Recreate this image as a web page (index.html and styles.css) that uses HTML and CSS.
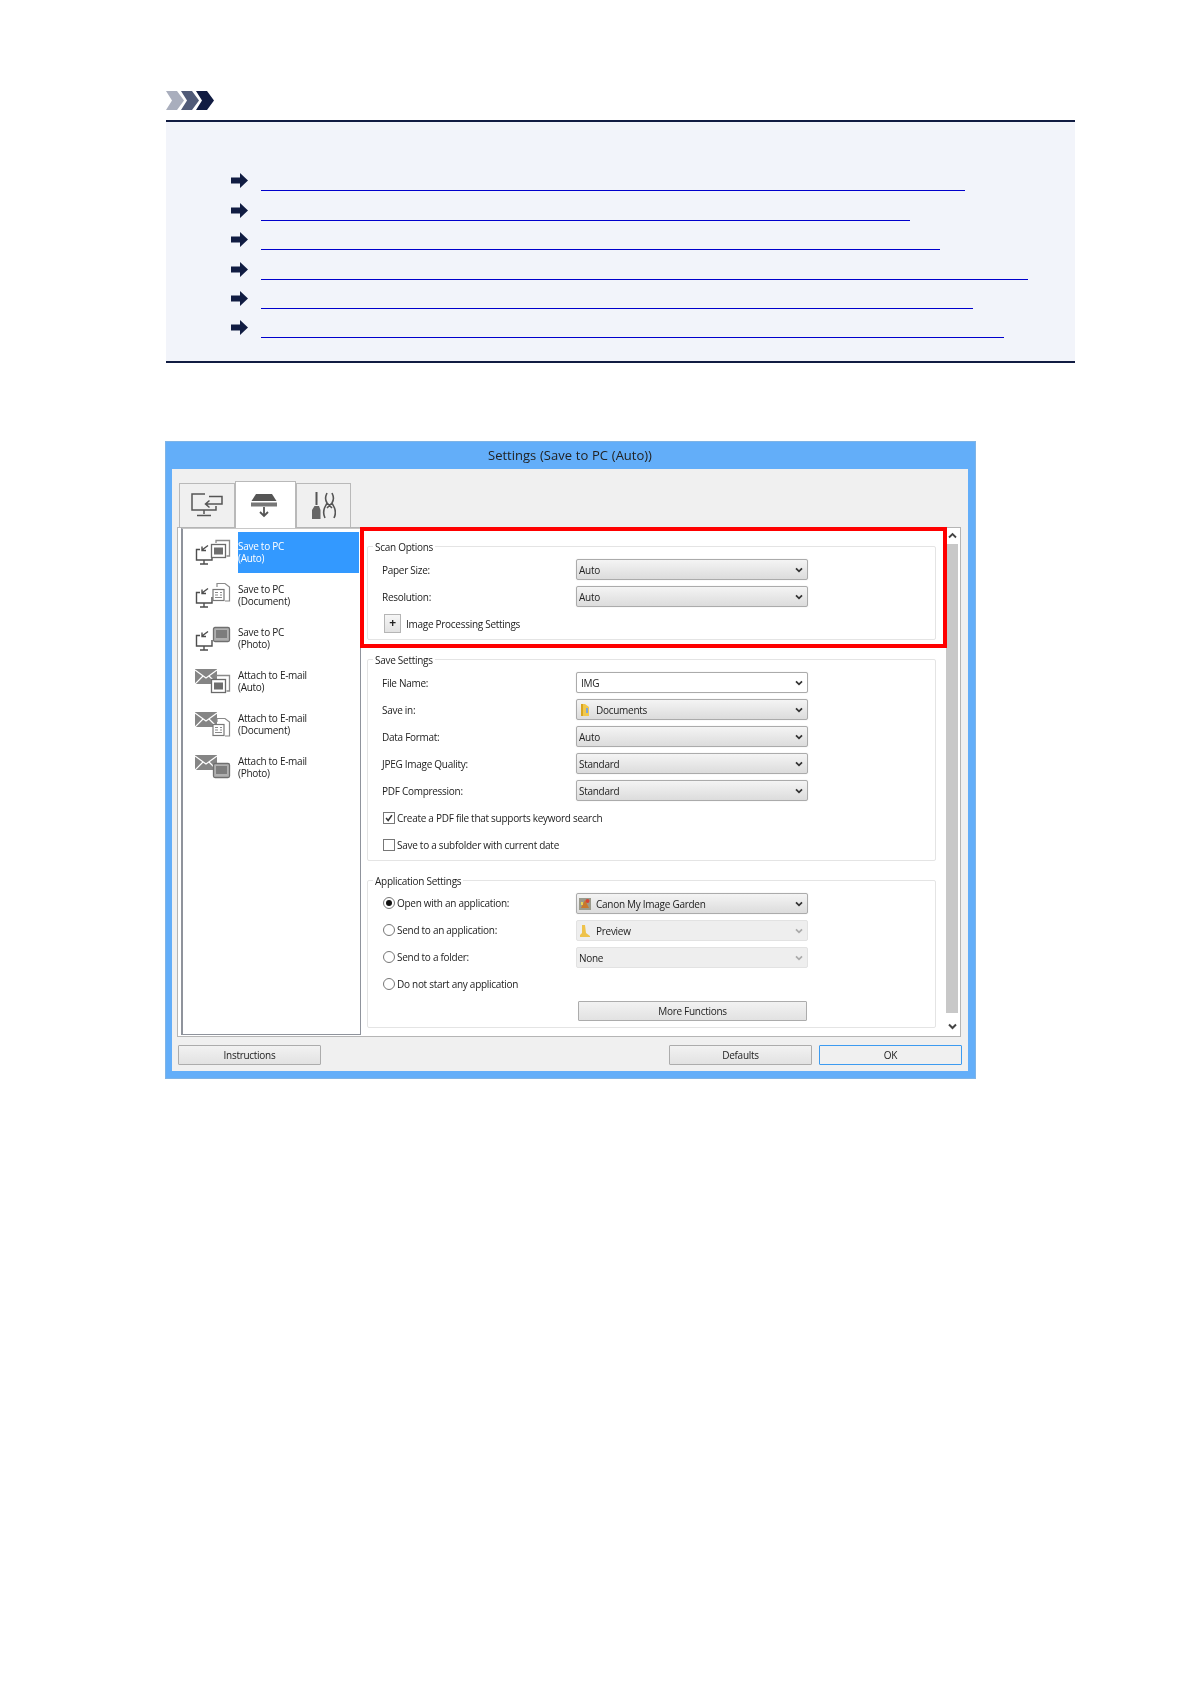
FILE: index.html
```html
<!DOCTYPE html>
<html lang="en">
<head>
    <meta charset="UTF-8">
    <meta name="viewport" content="width=device-width, initial-scale=1.0">
    <title>Settings (Save to PC (Auto))</title>
    <link rel="stylesheet" href="styles.css">
</head>
<body>
    <!-- shared icon parts -->
    <svg class="icon-defs" xmlns="http://www.w3.org/2000/svg">
        <defs>
            <g id="pc" fill="none" stroke="#4d4d4d" stroke-width="1.4">
                <path d="M5 10.5H1.5V21H17V15"/>
                <path d="M9 21v4M5 25h8"/>
                <path d="M13 6.5L7 11M7 7.5V11.5H11"/>
            </g>
            <g id="mail">
                <rect x="0" y="1" width="22" height="15" fill="#858585"/>
                <path d="M0 2L11 10L22 2M0 16L8 8M22 16L14 8" fill="none" stroke="#fff" stroke-width="1.2"/>
            </g>
            <g id="doc-auto" fill="none" stroke="#6a6a6a" stroke-width="1.3">
                <path d="M21 4V1.5H34.5V17H31.5" stroke="#8a8a8a"/>
                <rect x="16.5" y="5.5" width="14" height="13" fill="#fff"/>
                <rect x="19" y="8.5" width="9" height="7" fill="#6e6e6e" stroke="none"/>
            </g>
            <g id="doc-page" fill="none" stroke="#777" stroke-width="1.2">
                <path d="M22 5V1.5H30L34.5 5V19H30" stroke="#8a8a8a"/>
                <rect x="18" y="7.5" width="11" height="11" fill="#fff"/>
                <path d="M20 10.5h3M25 10.5h2M20 13h3M25 13h2M20 15.5h7" stroke="#888"/>
            </g>
            <g id="doc-photo">
                <rect x="18.5" y="2.5" width="16" height="14" rx="1.5" fill="#b0b0b0" stroke="#6f6f6f" stroke-width="1.3"/>
                <rect x="21" y="5" width="11" height="8" fill="#7d7d7d"/>
            </g>
            <path id="chev" d="M1 1.5L4.5 5L8 1.5" fill="none" stroke-width="2"/>
            <path id="go" d="M0 4.5H9V0L17 7.5L9 15V10.5H0Z" fill="#111c42"/>
            <g id="folder">
                <path d="M2 1H6L10 4V13H2Z" fill="#f1c84c"/>
                <path d="M2 1H4V13H2Z" fill="#d9a520"/>
                <path d="M7 5h2v5H7Z" fill="#7fa6d8"/>
            </g>
        </defs>
    </svg>

    <div class="page">
        <svg class="note-mark" viewBox="0 0 48 19" xmlns="http://www.w3.org/2000/svg">
            <path d="M0 0H11L18 9.5L11 19H0L6 9.5Z" fill="#a9aebd"/>
            <path d="M15 0H26L33 9.5L26 19H15L21 9.5Z" fill="#515b78"/>
            <path d="M30 0H41L48 9.5L41 19H30L36 9.5Z" fill="#111c42"/>
        </svg>

        <div class="note">
            <div class="note-row"><svg class="arrow" viewBox="0 0 17 15"><use href="#go"/></svg><a class="link link-1" href="#"></a></div>
            <div class="note-row"><svg class="arrow" viewBox="0 0 17 15"><use href="#go"/></svg><a class="link link-2" href="#"></a></div>
            <div class="note-row"><svg class="arrow" viewBox="0 0 17 15"><use href="#go"/></svg><a class="link link-3" href="#"></a></div>
            <div class="note-row"><svg class="arrow" viewBox="0 0 17 15"><use href="#go"/></svg><a class="link link-4" href="#"></a></div>
            <div class="note-row"><svg class="arrow" viewBox="0 0 17 15"><use href="#go"/></svg><a class="link link-5" href="#"></a></div>
            <div class="note-row"><svg class="arrow" viewBox="0 0 17 15"><use href="#go"/></svg><a class="link link-6" href="#"></a></div>
        </div>

        <div class="dialog">
            <div class="title-bar">Settings (Save to PC (Auto))</div>
            <div class="dialog-body">
                <div class="tabs">
                    <div class="tab tab-scan">
                        <svg class="tab-icon" width="33" height="24" viewBox="0 0 33 24" fill="none" stroke="#555" stroke-width="1.5">
                            <path d="M14 1H1V17H25V13"/>
                            <path d="M13 17v4M6 22.5h14"/>
                            <path d="M18 3.5H31V11H15M18.5 7.5L14.5 11L18.5 14.5"/>
                        </svg>
                    </div>
                    <div class="tab tab-active">
                        <svg class="tab-icon scanner-icon" width="26" height="24" viewBox="0 0 26 24">
                            <path d="M5 0H21L25.5 7H.5Z" fill="#555"/>
                            <rect x="0" y="8.5" width="26" height="4" fill="#777"/>
                            <path d="M13 13V21M9 18L13 22L17 18" fill="none" stroke="#555" stroke-width="1.8"/>
                        </svg>
                    </div>
                    <div class="tab tab-tools">
                        <svg class="tab-icon" width="24" height="27" viewBox="0 0 24 27">
                            <path d="M4.5 0V13" stroke="#555" stroke-width="2"/>
                            <path d="M2.5 14H7L8.5 18V27H0V18Z" fill="#666"/>
                            <path d="M15 1C13 5 13 8 15 11L12.5 16C11 20 12 24 13 26M20 1C22 5 22 8 20 11L22.5 16C24 20 23 24 22 26M15 11L20 16M20 11L15 16" fill="none" stroke="#555" stroke-width="1.6"/>
                        </svg>
                    </div>
                </div>

                <div class="pane">
                    <div class="job-list">
                        <div class="job">
                            <svg class="job-icon" viewBox="0 0 36 27"><use href="#pc"/><use href="#doc-auto"/></svg>
                            <div class="job-label job-selected">Save to PC<br>(Auto)</div>
                        </div>
                        <div class="job">
                            <svg class="job-icon" viewBox="0 0 36 27"><use href="#pc"/><use href="#doc-page"/></svg>
                            <div class="job-label">Save to PC<br>(Document)</div>
                        </div>
                        <div class="job">
                            <svg class="job-icon" viewBox="0 0 36 27"><use href="#pc"/><use href="#doc-photo"/></svg>
                            <div class="job-label">Save to PC<br>(Photo)</div>
                        </div>
                        <div class="job">
                            <svg class="job-icon" viewBox="0 0 36 27"><use href="#mail"/><use href="#doc-auto" y="6"/></svg>
                            <div class="job-label">Attach to E-mail<br>(Auto)</div>
                        </div>
                        <div class="job">
                            <svg class="job-icon" viewBox="0 0 36 27"><use href="#mail"/><use href="#doc-page" y="6"/></svg>
                            <div class="job-label">Attach to E-mail<br>(Document)</div>
                        </div>
                        <div class="job">
                            <svg class="job-icon" viewBox="0 0 36 27"><use href="#mail"/><use href="#doc-photo" y="7"/></svg>
                            <div class="job-label">Attach to E-mail<br>(Photo)</div>
                        </div>
                    </div>

                    <div class="settings">
                        <div class="group">
                            <div class="legend">Scan Options</div>
                            <div class="row">
                                <div class="row-label">Paper Size:</div>
                                <div class="select"><span class="select-text">Auto</span><svg class="chev" viewBox="0 0 9 7"><use href="#chev"/></svg></div>
                            </div>
                            <div class="row">
                                <div class="row-label">Resolution:</div>
                                <div class="select"><span class="select-text">Auto</span><svg class="chev" viewBox="0 0 9 7"><use href="#chev"/></svg></div>
                            </div>
                            <div class="row">
                                <div class="expander">
                                    <div class="plus">+</div>
                                    <span class="expander-text">Image Processing Settings</span>
                                </div>
                            </div>
                        </div>

                        <div class="group">
                            <div class="legend">Save Settings</div>
                            <div class="row">
                                <div class="row-label">File Name:</div>
                                <div class="select select-edit"><span class="select-text">IMG</span><svg class="chev" viewBox="0 0 9 7"><use href="#chev"/></svg></div>
                            </div>
                            <div class="row">
                                <div class="row-label">Save in:</div>
                                <div class="select">
                                    <svg class="app-icon" viewBox="0 0 12 14"><use href="#folder"/></svg>
                                    <span class="select-text">Documents</span><svg class="chev" viewBox="0 0 9 7"><use href="#chev"/></svg>
                                </div>
                            </div>
                            <div class="row">
                                <div class="row-label">Data Format:</div>
                                <div class="select"><span class="select-text">Auto</span><svg class="chev" viewBox="0 0 9 7"><use href="#chev"/></svg></div>
                            </div>
                            <div class="row">
                                <div class="row-label">JPEG Image Quality:</div>
                                <div class="select"><span class="select-text">Standard</span><svg class="chev" viewBox="0 0 9 7"><use href="#chev"/></svg></div>
                            </div>
                            <div class="row">
                                <div class="row-label">PDF Compression:</div>
                                <div class="select"><span class="select-text">Standard</span><svg class="chev" viewBox="0 0 9 7"><use href="#chev"/></svg></div>
                            </div>
                            <div class="row">
                                <div class="option option-solo">
                                    <span class="check">
                                        <svg viewBox="0 0 12 12"><path d="M2.5 6L5 9L9.5 2.5" fill="none" stroke="#333" stroke-width="1.8"/></svg>
                                    </span>
                                    Create a PDF file that supports keyword search
                                </div>
                            </div>
                            <div class="row">
                                <div class="option option-solo"><span class="check"></span>Save to a subfolder with current date</div>
                            </div>
                        </div>

                        <div class="group">
                            <div class="legend">Application Settings</div>
                            <div class="row">
                                <div class="row-label"><div class="option"><span class="radio radio-on"></span>Open with an application:</div></div>
                                <div class="select">
                                    <svg class="app-icon" viewBox="0 0 12 14">
                                        <rect x="0" y="1" width="12" height="12" fill="#9a9a8c"/>
                                        <path d="M2 11L6 3L10 11Z" fill="#c9792c"/>
                                        <circle cx="8.5" cy="4" r="2" fill="#d8432f"/>
                                        <path d="M2 5h2v3H2Z" fill="#e8d35a"/>
                                    </svg>
                                    <span class="select-text">Canon My Image Garden</span><svg class="chev" viewBox="0 0 9 7"><use href="#chev"/></svg>
                                </div>
                            </div>
                            <div class="row">
                                <div class="row-label"><div class="option"><span class="radio"></span>Send to an application:</div></div>
                                <div class="select select-off">
                                    <svg class="app-icon" viewBox="0 0 12 14"><path d="M3 1H6L7 9L11 12V13H1V11L3 9Z" fill="#eec24a"/></svg>
                                    <span class="select-text">Preview</span><svg class="chev" viewBox="0 0 9 7"><use href="#chev"/></svg>
                                </div>
                            </div>
                            <div class="row">
                                <div class="row-label"><div class="option"><span class="radio"></span>Send to a folder:</div></div>
                                <div class="select select-off"><span class="select-text">None</span><svg class="chev" viewBox="0 0 9 7"><use href="#chev"/></svg></div>
                            </div>
                            <div class="row">
                                <div class="row-label"><div class="option"><span class="radio"></span>Do not start any application</div></div>
                            </div>
                            <div class="row">
                                <div class="row-label"></div>
                                <div class="button button-more">More Functions</div>
                            </div>
                        </div>
                    </div>

                    <div class="scrollbar">
                        <svg class="scroll-arrow" viewBox="0 0 9 7"><path d="M1 5.5L4.5 2L8 5.5" fill="none" stroke="#444" stroke-width="1.8"/></svg>
                        <div class="scroll-thumb"></div>
                        <svg class="scroll-arrow" viewBox="0 0 9 7"><use href="#chev" stroke="#444"/></svg>
                    </div>

                    <!-- red callout over the Scan Options group -->
                    <div class="highlight"></div>
                </div>

                <div class="footer">
                    <div class="button">Instructions</div>
                    <div class="footer-right">
                        <div class="button">Defaults</div>
                        <div class="button button-default">OK</div>
                    </div>
                </div>
            </div>
        </div>
    </div>
</body>
</html>
```

FILE: styles.css
```css
body {
    margin: 0;
    background-color: white;
    color: #222;
    font-family: "Open Sans", "Noto Sans", sans-serif;
}

.icon-defs {
    position: absolute;
    width: 0;
    height: 0;
}

.page {
    width: 911px;
    padding: 91px 0 0 165px;
}

/* Note block */
.note-mark {
    display: block;
    width: 48px;
    height: 19px;
    margin-left: 1px;
}

.note {
    margin: 10px 0 0 1px;
    padding: 40px 0 22.6px 65px;
    width: 844px;
    background-color: #f2f4fa;
    border-top: 2px solid #111c42;
    border-bottom: 2px solid #111c42;
}

.note-row {
    display: flex;
    align-items: flex-end;
    height: 29.4px;
}

.arrow {
    width: 17px;
    height: 15px;
    margin-right: 13px;
    margin-bottom: 3px;
}

.link {
    display: block;
    height: 0;
    border-bottom: 1px solid #0000cc;
}

.link-1 { width: 704px; }
.link-2 { width: 649px; }
.link-3 { width: 679px; }
.link-4 { width: 767px; }
.link-5 { width: 712px; }
.link-6 { width: 743px; }

/* Dialog */
.dialog {
    width: 811px;
    margin-top: 78px;
    padding: 0 8px 8px 7px;
    box-sizing: border-box;
    background-color: #63aef9;
    outline: 1px solid #7fb4e6;
    outline-offset: -1px;
    font-size: 10px;
    letter-spacing: -0.28px;
    filter: blur(0.45px);
}

.title-bar {
    height: 28px;
    line-height: 28px;
    text-align: center;
    font-size: 13px;
    letter-spacing: 0;
    word-spacing: 0.4px;
    color: #222;
}

.dialog-body {
    height: 602px;
    padding: 12px 7px 0 5px;
    box-sizing: border-box;
    background-color: #f0f0f0;
}

.tabs {
    display: flex;
    align-items: flex-end;
    height: 47px;
    margin: 0 0 -1px 2px;
    position: relative;
    z-index: 1;
}

.tab {
    display: flex;
    justify-content: center;
    align-items: center;
    height: 44px;
    margin-bottom: 1px;
    box-sizing: border-box;
    border: 1px solid #b9b9b9;
    border-bottom: none;
    background-color: #f0f0f0;
}

.tab-scan { width: 56px; }
.tab-tools { width: 55px; }

.tab-active {
    width: 61px;
    height: 47px;
    margin-bottom: 0;
    background-color: white;
}

.scanner-icon {
    margin: 3px 3px 0 0;
}

.pane {
    position: relative;
    display: flex;
    height: 510px;
    box-sizing: border-box;
    padding-left: 3px;
    background-color: white;
    border: 1px solid #b5b5b5;
}

.job-list {
    width: 180px;
    height: 507px;
    padding-top: 3px;
    box-sizing: border-box;
    border: 1px solid #8f939c;
    border-top-color: #c8c8c8;
    border-left-width: 2px;
}

.job {
    display: flex;
    height: 43px;
    padding-left: 12px;
}

.job-icon {
    width: 36px;
    height: 27px;
    margin: 7px 7px 0 0;
}

.job-label {
    flex: 1;
    height: 41px;
    margin-right: 1px;
    padding-top: 8px;
    box-sizing: border-box;
    line-height: 12px;
}

.job-selected {
    background-color: #3399ff;
    color: white;
}

/* Settings column */
.settings {
    width: 585px;
    padding: 18px 10px 0 6px;
    box-sizing: border-box;
}

.highlight {
    position: absolute;
    top: -1px;
    left: 182px;
    width: 587px;
    height: 121px;
    box-sizing: border-box;
    border: 4px solid #ff0000;
}

.group {
    position: relative;
    margin-bottom: 19px;
    padding: 9px 0 2px 14px;
    border: 1px solid #e4e4e4;
    border-radius: 2px;
}

.legend {
    position: absolute;
    top: -7px;
    left: 5px;
    padding: 0 2px;
    background-color: white;
    line-height: 14px;
}

.row {
    display: flex;
    align-items: center;
    height: 27px;
}

.row-label {
    width: 194px;
    padding-top: 1px;
}

.select {
    display: flex;
    align-items: center;
    width: 232px;
    height: 21px;
    padding: 1px 3px 0 2px;
    box-sizing: border-box;
    border: 1px solid #ababab;
    border-radius: 2px;
    background: linear-gradient(#f4f4f4, #dcdcdc);
    box-shadow: 0 0 1px #ccc;
}

.select-edit {
    background: white;
    padding-left: 4px;
}

.select-off {
    border-color: #e2e2e2;
    background: #eeeeee;
    box-shadow: none;
}

.select-text {
    flex: 1;
}

.app-icon {
    width: 12px;
    height: 14px;
    margin-right: 5px;
}

.chev {
    width: 8px;
    height: 6px;
    margin-right: 1px;
    stroke: #333;
}

.select-off .chev {
    stroke: #aaa;
}

.expander {
    display: flex;
    align-items: center;
    gap: 5px;
    padding-left: 2px;
}

.expander-text {
    padding-top: 2px;
}

.plus {
    width: 17px;
    height: 19px;
    box-sizing: border-box;
    border: 1px solid #b5b5b5;
    background: linear-gradient(#f6f6f6, #e2e2e2);
    text-align: center;
    line-height: 16px;
    font-size: 12px;
    font-weight: bold;
}

.option {
    display: flex;
    align-items: center;
    gap: 2px;
    padding-left: 1px;
}

.option-solo {
    padding-top: 1px;
}

.row-label .option {
    margin-top: -1px;
}

.check {
    width: 12px;
    height: 12px;
    box-sizing: border-box;
    border: 1px solid #777;
    background-color: white;
}

.check svg {
    display: block;
    width: 10px;
    height: 10px;
}

.radio {
    display: flex;
    align-items: center;
    justify-content: center;
    width: 12px;
    height: 12px;
    box-sizing: border-box;
    border: 1px solid #777;
    border-radius: 50%;
    background-color: white;
}

.radio-on::after {
    content: "";
    width: 6px;
    height: 6px;
    border-radius: 50%;
    background-color: #111;
}

.button {
    display: flex;
    align-items: center;
    justify-content: center;
    width: 143px;
    height: 20px;
    box-sizing: border-box;
    border: 1px solid #acacac;
    border-radius: 1px;
    background: linear-gradient(#f2f2f2, #e2e2e2);
}

.button-more {
    width: 229px;
    margin-left: 2px;
}

.button-default {
    border-color: #3d9bf0;
    background: #f0f0f0;
}

/* Scrollbar */
.scrollbar {
    display: flex;
    flex-direction: column;
    align-items: center;
    width: 12px;
}

.scroll-arrow {
    flex: none;
    width: 9px;
    height: 7px;
    margin: 4px 0 5px;
}

.scroll-thumb {
    flex: 1;
    width: 100%;
    background-color: #c8c8c8;
}

.scrollbar .scroll-arrow:last-child {
    margin: 10px 0 6px;
}

/* Footer buttons */
.footer {
    display: flex;
    justify-content: space-between;
    width: 785px;
    padding: 8px 0 0 1px;
    box-sizing: border-box;
}

.footer-right {
    display: flex;
    gap: 7px;
}
```
